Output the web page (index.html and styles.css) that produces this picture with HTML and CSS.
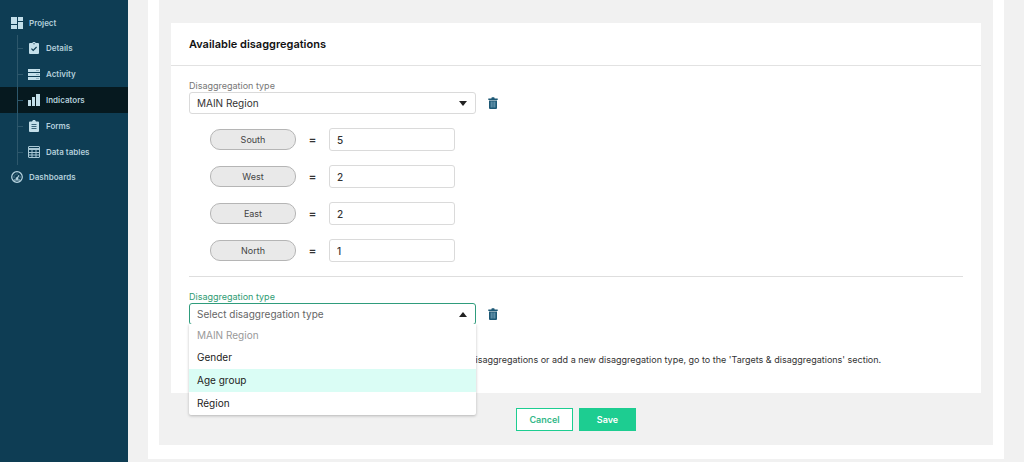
FILE: index.html
```html
<!DOCTYPE html>
<html lang="en">
<head>
    <meta charset="UTF-8">
    <meta name="viewport" content="width=device-width, initial-scale=1.0">
    <title>Indicators</title>
    <link rel="stylesheet" href="styles.css">
</head>
<body>
    <nav class="sidebar">
        <a class="nav-link" href="#project">
            <svg class="icon" viewBox="0 0 12 12"><path d="M0 0h6v7H0zM0 8h6v4H0zM7 0h5v4H7zM7 5h5v7H7z"/></svg>
            Project
        </a>
        <ul class="sub-nav">
            <li><a class="sub-link" href="#details">
                <svg class="icon" viewBox="0 0 12 12"><path fill-rule="evenodd" d="M2 1h2.200a2 2 0 0 1 3.600 0H10a1 1 0 0 1 1 1v9a1 1 0 0 1-1 1H2a1 1 0 0 1-1-1V2a1 1 0 0 1 1-1zM5.200 9.200 9 5.400 8.200 4.600 5.200 7.600 3.800 6.200 3 7zM5.400 1.300h1.200v1H5.400z"/></svg>
                Details
            </a></li>
            <li><a class="sub-link" href="#activity">
                <svg class="icon" viewBox="0 0 12 12"><path d="M0 1h12v3H0zM0 5h12v3H0zM0 9h12v3H0z"/><path class="icon-cut" d="M8 2h3v1H8zM8 6h3v1H8zM8 10h3v1H8z"/></svg>
                Activity
            </a></li>
            <li><a class="sub-link active" href="#indicators">
                <svg class="icon" viewBox="0 0 12 12"><path d="M0 6h3v6H0zM4 3h3v9H4zM8 0h4v12H8z"/></svg>
                Indicators
            </a></li>
            <li><a class="sub-link" href="#forms">
                <svg class="icon" viewBox="0 0 12 12"><path fill-rule="evenodd" d="M2 1.500h2L5 0h2l1 1.500h2a1 1 0 0 1 1 1V11a1 1 0 0 1-1 1H2a1 1 0 0 1-1-1V2.500a1 1 0 0 1 1-1zM3.500 4.200v.8h5v-.8zM3.500 6.200v.8h5v-.8zM3.500 8.200v.8h5v-.8z"/></svg>
                Forms
            </a></li>
            <li><a class="sub-link" href="#tables">
                <svg class="icon icon-line" viewBox="0 0 12 12"><path d="M.5 1a.5.5 0 0 1 .5-.5h10a.5.5 0 0 1 .5.5v10a.5.5 0 0 1-.5.5H1a.5.500 0 0 1-.5-.5zM.5 2.500h11M.5 3.500h11M.5 6.500h11M.5 9h11M4 4v7.500M8 4v7.500"/></svg>
                Data tables
            </a></li>
        </ul>
        <a class="nav-link" href="#dashboards">
            <svg class="icon icon-dial" viewBox="0 0 12 12"><circle cx="6" cy="6" r="5.300"/><path d="M2.800 9h6.400M6 7.500 8 4.300M2.600 6h.8M3.800 3.800l.4.400M6 2.700v.6M8.700 6h.8"/><circle cx="6" cy="7.600" r=".8"/></svg>
            Dashboards
        </a>
    </nav>

    <main class="content">
        <div class="panel">
            <form class="panel-inner">
                <section class="card">
                    <h2 class="card-title">Available disaggregations</h2>
                    <div class="card-body">
                        <label class="field-label" for="type1">Disaggregation type</label>
                        <div class="select-row">
                            <div class="select-box">
                                <select class="select" id="type1">
                                    <option>MAIN Region</option>
                                    <option>Gender</option>
                                    <option>Age group</option>
                                    <option>Région</option>
                                </select>
                            </div>
                            <button class="delete" type="button" aria-label="Delete">
                                <svg viewBox="0 0 10 12"><path class="trash" d="M1 3.500h8V11a1 1 0 0 1-1 1H2a1 1 0 0 1-1-1zM.3 1.600h3L3.800.3h2.400l.5 1.300h3v1.300H.3z"/><path class="trash-bars" d="M3.200 4.500v6M5 4.500v6M6.800 4.500v6"/></svg>
                            </button>
                        </div>

                        <div class="targets">
                            <div class="target-row">
                                <label class="pill" for="south">South</label>
                                <span class="equals">=</span>
                                <input class="value" id="south" type="text" value="5">
                            </div>
                            <div class="target-row">
                                <label class="pill" for="west">West</label>
                                <span class="equals">=</span>
                                <input class="value" id="west" type="text" value="2">
                            </div>
                            <div class="target-row">
                                <label class="pill" for="east">East</label>
                                <span class="equals">=</span>
                                <input class="value" id="east" type="text" value="2">
                            </div>
                            <div class="target-row">
                                <label class="pill" for="north">North</label>
                                <span class="equals">=</span>
                                <input class="value" id="north" type="text" value="1">
                            </div>
                        </div>

                        <hr class="divider">

                        <label class="field-label focused" for="type2">Disaggregation type</label>
                        <div class="select-row">
                            <div class="select-box open">
                                <select class="select" id="type2">
                                    <option>Select disaggregation type</option>
                                </select>
                                <ul class="menu">
                                    <li class="option disabled">MAIN Region</li>
                                    <li class="option">Gender</li>
                                    <li class="option highlighted">Age group</li>
                                    <li class="option">Région</li>
                                </ul>
                            </div>
                            <button class="delete" type="button" aria-label="Delete">
                                <svg viewBox="0 0 10 12"><path class="trash" d="M1 3.500h8V11a1 1 0 0 1-1 1H2a1 1 0 0 1-1-1zM.3 1.600h3L3.800.3h2.400l.5 1.300h3v1.300H.3z"/><path class="trash-bars" d="M3.200 4.500v6M5 4.500v6M6.800 4.500v6"/></svg>
                            </button>
                        </div>

                        <p class="note">disaggregations or add a new disaggregation type, go to the 'Targets &amp; disaggregations' section.</p>
                    </div>
                </section>

                <div class="actions">
                    <button class="btn" type="button">Cancel</button>
                    <button class="btn btn-save" type="submit">Save</button>
                </div>
            </form>
        </div>
    </main>
</body>
</html>
```
FILE: styles.css
```css
* {
    box-sizing: border-box;
}

body {
    margin: 0;
    min-height: 100vh;
    display: flex;
    font-family: Inter, "Liberation Sans", sans-serif;
    font-size: 10px;
    color: #333;
    background-color: #f1f1f1;
}

ul {
    list-style: none;
    margin: 0;
    padding: 0;
}

/* Sidebar */
.sidebar {
    width: 128px;
    flex-shrink: 0;
    padding-top: 11px;
    background-color: #0e3d54;
}

.nav-link,
.sub-link {
    display: flex;
    align-items: center;
    gap: 6px;
    height: 24px;
    padding-left: 11px;
    color: #b4cfdb;
    font-size: 8px;
    font-weight: 600;
    text-decoration: none;
}

.sub-link {
    position: relative;
    height: 26px;
    padding-left: 28px;
}

.sub-link::before,
.sub-link::after {
    content: "";
    position: absolute;
    left: 17px;
    background-color: #2d576b;
}

.sub-link::before {
    top: 0;
    width: 1px;
    height: 100%;
}

.sub-link::after {
    top: 13px;
    width: 6px;
    height: 1px;
}

.sub-link.active {
    background-color: #06191f;
}

.icon {
    width: 12px;
    height: 12px;
    fill: #c3dfea;
}

.icon-cut {
    fill: #8fb0bf;
}

.icon-line {
    fill: none;
    stroke: #a9c8d5;
}

.icon-dial {
    fill: none;
    stroke: #b9d6e2;
    stroke-width: 1.2;
}

/* Main area */
.content {
    flex: 1;
    padding: 0 20px 3px;
}

.panel {
    padding: 0 11px 14px;
    background-color: #fff;
}

.panel-inner {
    padding: 23px 12px 14px;
    background-color: #f1f1f1;
}

.card {
    background-color: #fff;
}

.card-title {
    margin: 0;
    padding: 0 18px;
    border-bottom: 1px solid #e2e2e2;
    font-size: 11px;
    font-weight: 600;
    line-height: 42px;
    color: #111;
}

.card-body {
    padding: 14px 18px 27px;
}

.field-label {
    display: block;
    font-size: 9px;
    line-height: 12px;
    color: #777;
}

.field-label.focused {
    color: #2f9c74;
}

.select-row {
    display: flex;
    align-items: center;
    gap: 12px;
}

.select-box {
    position: relative;
    width: 287px;
}

.select-box::after {
    content: "";
    position: absolute;
    top: 9px;
    right: 9px;
    border: 4px solid transparent;
    border-top: 5px solid #222;
    border-bottom: 0;
    pointer-events: none;
}

.select {
    display: block;
    width: 100%;
    height: 22px;
    padding: 0 7px;
    border: 1px solid #dadada;
    border-radius: 3px;
    appearance: none;
    background-color: #fff;
    font-family: inherit;
    font-size: 10px;
    color: #333;
}

.open .select {
    border-color: #2f9c7c;
    color: #666;
}

.select-box.open::after {
    border-top: 0;
    border-bottom: 5px solid #222;
}

.menu {
    position: absolute;
    top: 21px;
    left: 0;
    width: 100%;
    background-color: #fff;
    border-radius: 0 0 2px 2px;
    box-shadow: 0 1px 3px rgba(0,0,0,0.25);
    clip-path: inset(0 -4px -4px);
}

.option {
    padding: 0 8px;
    line-height: 23px;
    color: #222;
}

.option.disabled {
    line-height: 22px;
    color: #999;
}

.option.highlighted {
    background-color: #dafdf5;
}

.delete {
    width: 10px;
    height: 12px;
    padding: 0;
    border: none;
    background: none;
    cursor: pointer;
}

.delete svg {
    display: block;
}

.trash {
    fill: #1d5875;
}

.trash-bars {
    stroke: #8fb9cd;
    stroke-width: 0.8;
}

.targets {
    display: flex;
    flex-direction: column;
    gap: 14px;
    padding: 14px 21px;
}

.target-row {
    display: flex;
    align-items: center;
}

.pill {
    width: 86px;
    border: 1px solid #b5b5b5;
    border-radius: 10px;
    background-color: #e9e9e9;
    font-size: 9px;
    line-height: 19px;
    text-align: center;
    color: #444;
}

.equals {
    width: 33px;
    font-size: 12px;
    font-weight: 500;
    line-height: 16px;
    text-align: center;
}

.value {
    width: 126px;
    height: 23px;
    padding: 0 7px;
    border: 1px solid #dadada;
    border-radius: 3px;
    font-family: inherit;
    font-size: 10px;
    font-weight: 500;
    color: #333;
}

.divider {
    margin: 0 0 14px;
    border: none;
    border-top: 1px solid #dedede;
}

.note {
    margin: 29px 0 0;
    padding-left: 281px;
    font-size: 9px;
    line-height: 12px;
}

.actions {
    display: flex;
    justify-content: center;
    gap: 6px;
    padding-top: 15px;
}

.btn {
    width: 57px;
    height: 23px;
    padding: 0;
    border: 1px solid #1dcd91;
    background-color: #fff;
    font-family: inherit;
    font-size: 9px;
    font-weight: 600;
    color: #35b889;
    cursor: pointer;
}

.btn-save {
    background-color: #1dcd91;
    color: #fff;
}
```
